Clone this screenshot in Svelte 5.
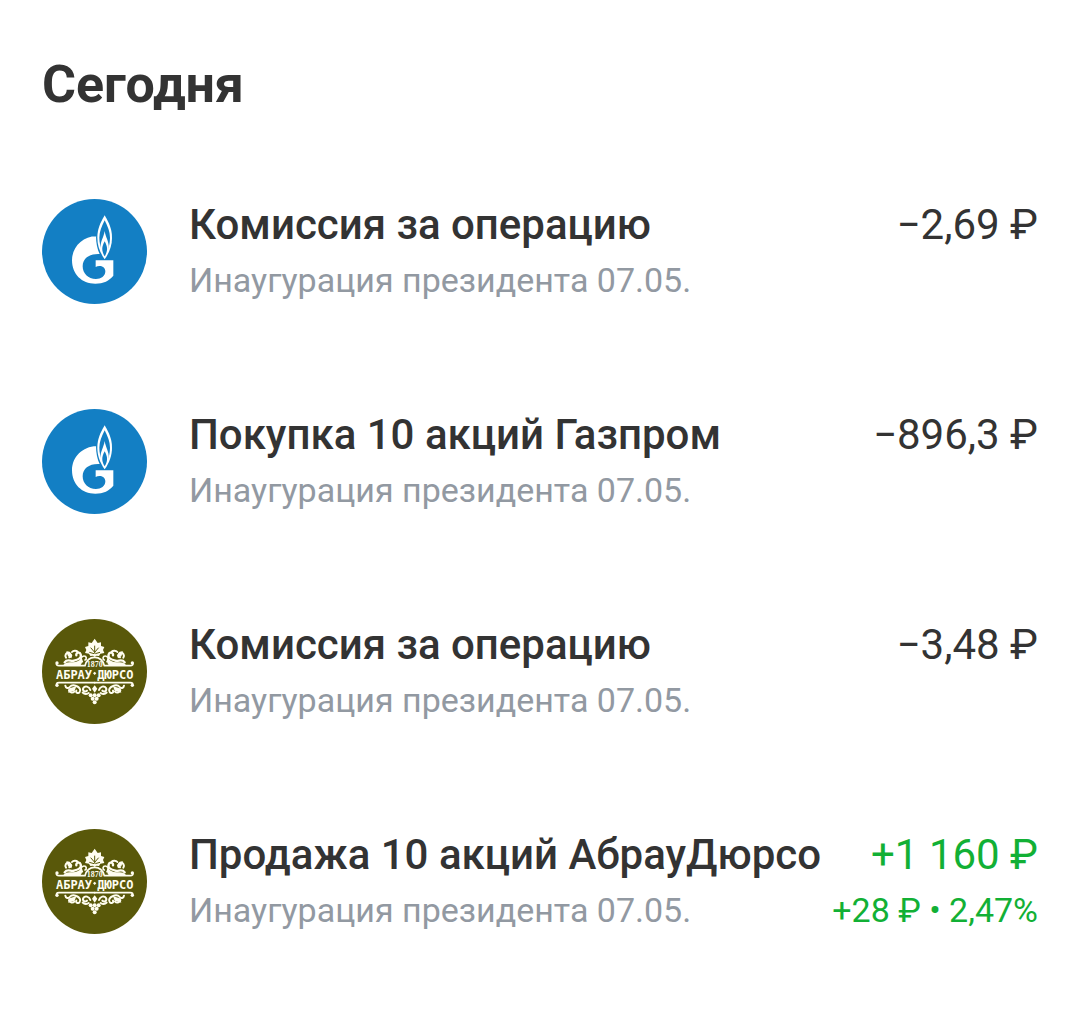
<script lang="ts">
  type Operation = {
    logo: 'gazprom' | 'abrau';
    title: string;
    note: string;
    amount: string;
    profit?: string;
    income?: boolean;
  };

  const note = 'Инаугурация президента 07.05.';

  const operations: Operation[] = [
    { logo: 'gazprom', title: 'Комиссия за операцию', note, amount: '−2,69 ₽' },
    { logo: 'gazprom', title: 'Покупка 10 акций Газпром', note, amount: '−896,3 ₽' },
    { logo: 'abrau', title: 'Комиссия за операцию', note, amount: '−3,48 ₽' },
    {
      logo: 'abrau',
      title: 'Продажа 10 акций АбрауДюрсо',
      note,
      amount: '+1 160 ₽',
      profit: '+28 ₽ • 2,47%',
      income: true
    }
  ];
</script>

{#snippet gazprom()}
  <svg class="logo" viewBox="18 18 315 315" role="img" aria-label="Газпром">
    <circle cx="175.5" cy="175.5" r="157.5" fill="#137fc4" />
    <path
      fill="#fff"
      d="M181 129C140 131 108 161 108 202c0 42 29 70 70 70 24 0 42-9 54-24v-46h-53v20c9-6 29-4 29 13 0 15-13 23-28 23-24 0-40-17-40-38 0-23 18-37 46-37h5c-7-14-11-34-11-54Z"
    />
    <path
      fill="#fff"
      d="M206 67c-13 22-22 42-22 67 0 24 8 45 22 65 14-20 22-41 22-65 0-25-9-45-22-67Z"
    />
    <path
      fill="#137fc4"
      d="M206 82c-9 19-16 34-16 52 0 14 3 28 9 40h14c6-12 9-26 9-40 0-18-7-33-16-52Z"
    />
    <path
      fill="#fff"
      d="M206 114c-3 20-14 33-12 50 1 12 6 22 12 31 6-9 11-19 12-31 2-17-9-30-12-50Z"
    />
    <path fill="#137fc4" d="M206 145c-5 10-8 17-7 26 1 7 3 13 7 19 4-6 6-12 7-19 1-9-2-16-7-26Z" />
  </svg>
{/snippet}

{#snippet scrolls()}
  <!-- left half of the ornament, mirrored for the right one -->
  <g fill="none" stroke="#fffdf0" stroke-linecap="round">
    <path stroke-width="5" d="M63 150c-4 5 0 8 6 8h78c4-15 14-25 29-25" />
    <path stroke-width="5" d="M63 217c-4-5 0-8 6-8h107" />
    <path stroke-width="7" d="M86 148c8-12 18-2 28-5 11-3 24-7 20-19-3-8-15-6-13 3" />
    <path stroke-width="6" d="M90 134c-5-7 1-16 8-14s9 10 2 13M108 117c4-5 13-5 17-1" />
    <path stroke-width="5" d="M139 146c-8-6-3-17 5-17s9 10 3 12" />
    <path stroke-width="6" d="M88 218c1 8 9 9 13 4s12-7 20-3c9 4 15 11 10 18-4 6-13 2-10-4" />
    <path stroke-width="6" d="M163 231c-3-11-16-14-21-6-4 8 6 14 11 8M140 239c5 5 12 5 18 1" />
    <path stroke-width="6" d="M99 233c3 6 11 8 16 3" />
  </g>
  <g fill="#fffdf0">
    <circle cx="63" cy="150" r="5" />
    <circle cx="63" cy="217" r="5" />
    <path d="M82 156c6-8 15-9 25-8 14 1 24-5 30-13 5 7 1 15-3 21Z" />
    <path d="M91 115l10 1 8 11-3 9-10-6Z" />
    <path d="M95 227l26-7-5 13-20 6 3-7Z" />
  </g>
{/snippet}

{#snippet abrau()}
  <svg class="logo" viewBox="18 18 315 315" role="img" aria-label="Абрау-Дюрсо">
    <circle cx="175.5" cy="175.5" r="157.5" fill="#59580a" />
    {@render scrolls()}
    <g transform="translate(352 0) scale(-1 1)">{@render scrolls()}</g>
    <!-- vine leaf -->
    <path
      fill="#fffdf0"
      d="M176 77l9 13 10-2 0 11 10 3-4 9 4 9-12 2-4 7-8-1-5 3-5-3-8 1-4-7-12-2 4-9-4-9 10-3 0-11 10 2Z"
    />
    <path
      fill="none"
      stroke="#59580a"
      stroke-width="3"
      d="M176 98v24M176 118l-12-14M176 118l12-14M174 122l-14-4M178 122l14-4"
    />
    <!-- grapes -->
    <g fill="#fffdf0">
      <circle cx="164" cy="247" r="6" />
      <circle cx="176" cy="247" r="6" />
      <circle cx="188" cy="247" r="6" />
      <circle cx="170" cy="257" r="6" />
      <circle cx="182" cy="257" r="6" />
      <circle cx="176" cy="268" r="6" />
      <path d="M176 239l-8-12 8-10 8 10Z" />
      <path d="M171 181l5-5 5 5-5 5Z" />
    </g>
    <text class="year" x="176" y="162">1870</text>
    <text class="brand" x="114" y="197">АБРАУ</text>
    <text class="brand" x="238" y="197">ДЮРСО</text>
  </svg>
{/snippet}

<main class="feed">
  <h1>Сегодня</h1>

  <ul class="operations">
    {#each operations as op}
      <li class="operation">
        {#if op.logo === 'gazprom'}
          {@render gazprom()}
        {:else}
          {@render abrau()}
        {/if}
        <div class="info">
          <h2>{op.title}</h2>
          <p class="small">{op.note}</p>
        </div>
        <div class="sum" class:income={op.income}>
          <p class="amount">{op.amount}</p>
          {#if op.profit}
            <p class="small">{op.profit}</p>
          {/if}
        </div>
      </li>
    {/each}
  </ul>
</main>

<style>
  :global(body) {
    margin: 0;
    background: #fff;
  }

  .feed {
    padding: 53px 42px 72px;
    font-family: Roboto, 'Liberation Sans', sans-serif;
    color: #333;
  }

  h1,
  h2,
  p {
    margin: 0;
  }

  h1 {
    font-size: 52px;
    line-height: 64px;
    font-weight: 700;
  }

  .operations {
    display: flex;
    flex-direction: column;
    gap: 100px;
    margin: 80px 0 0;
    padding: 0;
    list-style: none;
  }

  .operation {
    display: flex;
    align-items: flex-start;
  }

  .logo {
    flex: none;
    width: 105px;
    height: 105px;
    margin-top: 2px;
  }

  .info {
    flex: 1;
    min-width: 0;
    margin-left: 42px;
  }

  h2,
  .amount {
    font-size: 42px;
    line-height: 56px;
  }

  h2 {
    font-weight: 500;
  }

  .small {
    font-size: 34px;
    line-height: 54px;
  }

  .info .small {
    color: #9299a2;
  }

  .sum {
    flex: none;
    text-align: right;
    white-space: nowrap;
  }

  .income {
    color: #12b035;
  }

  .year,
  .brand {
    fill: #fffdf0;
    text-anchor: middle;
    font-weight: 700;
  }

  .year {
    font-family: 'Liberation Serif', serif;
    font-size: 24px;
  }

  .brand {
    font-family: 'DejaVu Sans Mono', monospace;
    font-size: 36px;
  }
</style>
